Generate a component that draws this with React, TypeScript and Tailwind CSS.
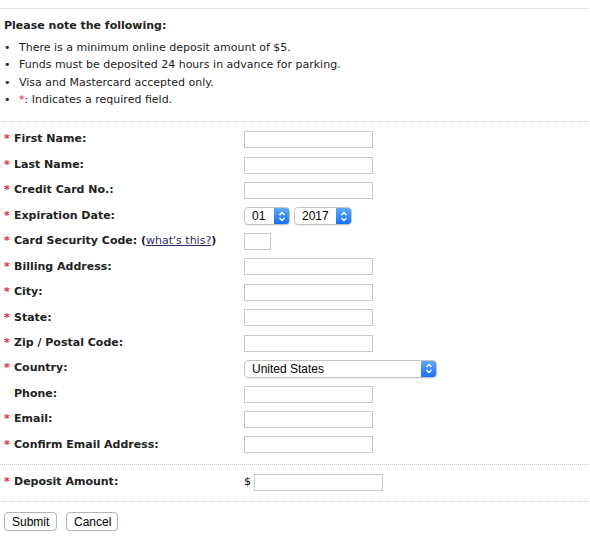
import React from "react";

const font = { fontFamily: '"DejaVu Sans", Verdana, sans-serif' };

function TextBox({ w = 129 }: { w?: number }) {
  return (
    <div
      className="h-[17px] border border-[#c8c8c8] bg-white"
      style={{ width: w }}
    />
  );
}

function Arrows() {
  return (
    <svg width="8" height="11" viewBox="0 0 8 11" fill="none">
      <path d="M1.5 4 L4 1.5 L6.5 4" stroke="white" strokeWidth="1.4" />
      <path d="M1.5 7 L4 9.5 L6.5 7" stroke="white" strokeWidth="1.4" />
    </svg>
  );
}

function Select({ w, value }: { w: number; value: string }) {
  return (
    <div
      className="flex h-[18px] items-stretch rounded-[4px] border border-[#c4c4c4] bg-white shadow-[0_1px_0_rgba(0,0,0,0.06)] overflow-hidden"
      style={{ width: w }}
    >
      <div
        className="flex flex-1 items-center pl-[7px] text-[12px] text-black"
        style={{ fontFamily: '"Liberation Sans", Arial, sans-serif' }}
      >
        {value}
      </div>
      <div className="flex w-[15px] items-center justify-center bg-gradient-to-b from-[#5ea9fb] to-[#1570f2]">
        <Arrows />
      </div>
    </div>
  );
}

function Label({ req = true, children }: { req?: boolean; children: React.ReactNode }) {
  return (
    <div className="flex items-center pl-[4px] text-[11px] font-bold text-[#222]">
      <span className={req ? "w-[10px] text-[#e8232a]" : "w-[10px] text-transparent"}>*</span>
      <span>{children}</span>
    </div>
  );
}

type Row = { label: React.ReactNode; req?: boolean; field: React.ReactNode };

export default function App() {
  const rows: Row[] = [
    { label: "First Name:", field: <TextBox /> },
    { label: "Last Name:", field: <TextBox /> },
    { label: "Credit Card No.:", field: <TextBox /> },
    {
      label: "Expiration Date:",
      field: (
        <div className="flex gap-[4px]">
          <Select w={46} value="01" />
          <Select w={58} value="2017" />
        </div>
      ),
    },
    {
      label: (
        <>
          Card Security Code: (
          <a href="#" className="font-normal text-[#2b2a6b] underline">
            what's this?
          </a>
          )
        </>
      ),
      field: <TextBox w={27} />,
    },
    { label: "Billing Address:", field: <TextBox /> },
    { label: "City:", field: <TextBox /> },
    { label: "State:", field: <TextBox /> },
    { label: "Zip / Postal Code:", field: <TextBox /> },
    { label: "Country:", field: <Select w={193} value="United States" /> },
    { label: "Phone:", req: false, field: <TextBox /> },
    { label: "Email:", field: <TextBox /> },
    { label: "Confirm Email Address:", field: <TextBox /> },
  ];

  const btn =
    "h-[19px] rounded-[4px] border border-[#b4b4b4] bg-white px-[7px] text-[12px] leading-none text-black shadow-[0_1px_0_rgba(0,0,0,0.08)]";

  return (
    <div className="w-[589px] bg-white text-[11px] text-[#222]" style={font}>
      <div className="mt-[8px] border-t border-[#e2e2ea]" />
      <div className="pt-[8px] pl-[4px] font-bold leading-[17px]">Please note the following:</div>
      <ul className="mt-[4.5px] pl-[4px] leading-[17.5px]">
        {[
          <>There is a minimum online deposit amount of $5.</>,
          <>Funds must be deposited 24 hours in advance for parking.</>,
          <>Visa and Mastercard accepted only.</>,
          <>
            <span className="text-[#e8232a]">*</span>: Indicates a required field.
          </>,
        ].map((t, i) => (
          <li key={i} className="flex">
            <span className="w-[15px]">•</span>
            <span>{t}</span>
          </li>
        ))}
      </ul>
      <div className="mt-[12px] border-t border-dotted border-[#c8c8d2]" />
      <div className="pt-[5.5px]">
        {rows.map((r, i) => (
          <div key={i} className="grid h-[25.45px] grid-cols-[244px_1fr] items-center">
            <Label req={r.req !== false}>{r.label}</Label>
            <div className="flex items-center">{r.field}</div>
          </div>
        ))}
      </div>
      <div className="mt-[6px] border-t border-dotted border-[#c8c8d2]" />
      <div className="grid h-[25.4px] mt-[5px] grid-cols-[244px_1fr] items-center">
        <Label>Deposit Amount:</Label>
        <div className="flex items-center gap-[3px]">
          <span className="text-[11px] text-black">$</span>
          <TextBox />
        </div>
      </div>
      <div className="mt-[6px] border-t border-dotted border-[#c8c8d2]" />
      <div
        className="flex gap-[9px] pl-[4px] pt-[10px]"
        style={{ fontFamily: '"Liberation Sans", Arial, sans-serif' }}
      >
        <button className={btn + " w-[53px]"}>Submit</button>
        <button className={btn + " w-[52px]"}>Cancel</button>
      </div>
    </div>
  );
}
